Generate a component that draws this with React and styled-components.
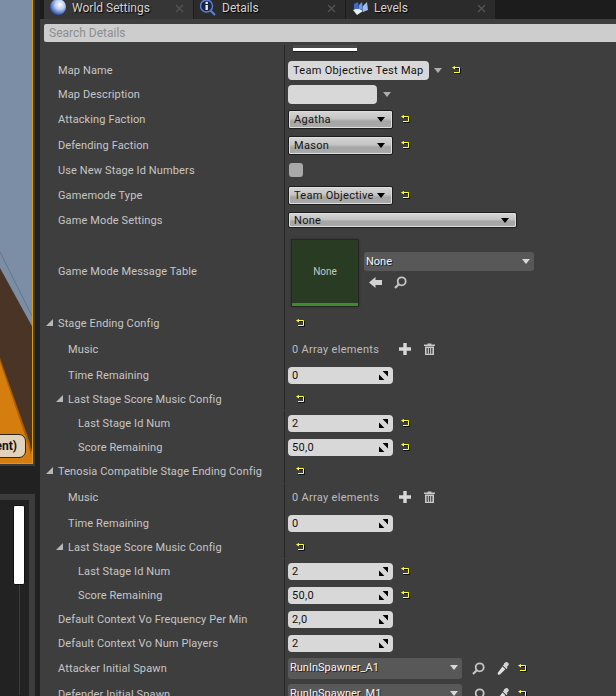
import React from 'react';
import styled, { createGlobalStyle } from 'styled-components';

const Global = createGlobalStyle`
  html, body { margin: 0; padding: 0; background: #1f1f1f; }
  body { width: 616px; height: 696px; overflow: hidden; font-family: Roboto, "Liberation Sans", sans-serif; }
  * { box-sizing: border-box; }
`;

const Page = styled.div`
  display: flex;
  width: 616px;
  height: 696px;
  overflow: hidden;
`;

const LeftColumn = styled.div`
  width: 40px;
  flex: none;
  display: flex;
  flex-direction: column;
  background: #212121;
`;
const ViewportFrame = styled.div`
  width: 35px;
  height: 466px;
  flex: none;
  background: #3a3a3a;
  padding: 0 2px 2px 0;
`;
const Viewport = styled.div`
  position: relative;
  height: 464px;
  border-right: 1px solid #d99a17;
  border-bottom: 1px solid #d99a17;
  overflow: hidden;
  background: #7b8ea5;
`;
const Scene = styled.svg`
  display: block;
`;
const LevelPill = styled.div`
  position: absolute;
  right: 6px;
  top: 434px;
  height: 24px;
  line-height: 22px;
  padding: 0 8px;
  border: 1px solid #2c2418;
  border-radius: 7px;
  background: #e2d2bc;
  color: #111;
  font-size: 12px;
  font-weight: 700;
  white-space: nowrap;
`;
const LowerFrame = styled.div`
  margin-top: 28px;
  width: 35px;
  flex: 1;
  background: #3c3c3c;
  padding: 6px 6px 0 0;
  display: flex;
`;
const LowerInner = styled.div`
  flex: 1;
  background: #222;
  display: flex;
  flex-direction: column;
  padding: 5px 0 1px;
`;
const WhiteBar = styled.div`
  margin-left: 13px;
  width: 12px;
  height: 80px;
  flex: none;
  background: #fff;
  border: 1px solid #111;
  border-radius: 2px;
`;
const TrackLine = styled.div`
  margin-left: 19px;
  width: 1px;
  flex: 1;
  background: #3c3c3c;
`;

const RightPanel = styled.div`
  flex: 1;
  min-width: 0;
  display: flex;
  flex-direction: column;
`;
const TabBar = styled.div`
  height: 19px;
  flex: none;
  display: flex;
  padding-left: 4px;
  background: #1c1c1c;
`;
const Tab = styled.div`
  width: ${p => p.$w}px;
  height: 19px;
  flex: none;
  display: flex;
  align-items: center;
  padding: 0 7px 3px 6px;
  background: ${p => (p.$active ? '#363636' : '#2b2b2b')};
  border-right: 1px solid #1c1c1c;
  color: #d2d2d2;
  font-size: 12px;
  text-shadow: 1px 1px 1px #000;
`;
const TabIcon = styled.svg`
  flex: none;
  margin-right: 6px;
`;
const TabTitle = styled.span`
  flex: 1;
`;
const TabClose = styled.svg`
  flex: none;
  margin-right: 2px;
`;
const Panel = styled.div`
  flex: 1;
  min-height: 0;
  background: #3e3e3e;
  display: flex;
  flex-direction: column;
  padding-top: 5px;
`;
const SearchBox = styled.div`
  height: 18px;
  flex: none;
  margin-left: 4px;
  padding-left: 5px;
  background: #cdcdcd;
  border-radius: 2px 0 0 2px;
  color: #8d8d8d;
  font-size: 12px;
  line-height: 18px;
`;
const Rows = styled.div`
  margin-top: 3px;
  flex: 1;
  min-height: 0;
  overflow: hidden;
`;
const Row = styled.div`
  display: flex;
  height: ${p => p.$h || 24}px;
  padding-bottom: ${p => p.$pb || 0}px;
`;
const NameCell = styled.div`
  width: 244px;
  flex: none;
  display: flex;
  align-items: center;
  padding-left: ${p => 6 + (p.$depth || 0) * 10}px;
  color: #c6c6c6;
  font-size: 11px;
  letter-spacing: 0.12px;
  white-space: nowrap;
`;
const CaretSlot = styled.span`
  width: 12px;
  flex: none;
  display: flex;
  align-items: center;
`;
const CaretIcon = styled.svg`
  display: block;
  margin-top: -2px;
`;
const ValueCell = styled.div`
  flex: 1;
  min-width: 0;
  display: flex;
  align-items: ${p => p.$align || 'center'};
  padding-left: 3px;
  border-left: 1px solid #262626;
  color: #111;
  font-size: 11px;
  letter-spacing: 0.3px;
  white-space: nowrap;
`;
const Strip = styled.div`
  margin-left: 5px;
  width: 64px;
  height: 7px;
  background: #fff;
  border-top: 3px solid #4a4a4a;
  border-bottom: 1px solid #1e1e1e;
`;
const TextBox = styled.div`
  width: ${p => p.$w}px;
  height: 19px;
  flex: none;
  padding-left: 5px;
  background: #d8d8d8;
  border-radius: 4px;
  line-height: 19px;
  color: #111;
`;
const SmallArrow = styled.span`
  flex: none;
  margin-left: ${p => p.$ml || 5}px;
  width: 0;
  height: 0;
  border-left: 4.5px solid transparent;
  border-right: 4.5px solid transparent;
  border-top: 5px solid ${p => p.$color || '#adadad'};
`;
const Combo = styled.div`
  width: ${p => p.$w}px;
  height: ${p => p.$h || 19}px;
  flex: none;
  display: flex;
  align-items: center;
  justify-content: space-between;
  padding: 0 7px 0 5px;
  border: 1px solid #1d1d1d;
  box-shadow: inset 0 0 0 1px #dedede;
  border-radius: 2px;
  background: linear-gradient(#d6d6d6, #c4c4c4 45%, #a6a6a6 60%, #a9a9a9);
  color: #151515;
`;
const ComboArrow = styled.span`
  flex: none;
  width: 0;
  height: 0;
  border-left: 4.5px solid transparent;
  border-right: 4.5px solid transparent;
  border-top: 5px solid #000;
`;
const Checkbox = styled.div`
  width: 14px;
  height: 14px;
  margin-left: 1px;
  background: #a9a9a9;
  border-radius: 3px;
`;
const Reset = styled.svg`
  flex: none;
  display: block;
  margin-left: ${p => p.$ml ?? 8}px;
`;
const NumberBox = styled.div`
  width: 105px;
  height: 17px;
  flex: none;
  display: flex;
  align-items: center;
  justify-content: space-between;
  padding: 0 5px 0 4px;
  background: #d8d8d8;
  border-radius: 4px;
  color: #111;
`;
const AssetPicker = styled.div`
  width: ${p => p.$w}px;
  height: ${p => p.$h}px;
  flex: none;
  display: flex;
  align-items: center;
  justify-content: space-between;
  padding: 0 4px 1px 2px;
  background: #585858;
  border-radius: 3px;
  color: #f4f4f4;
  letter-spacing: 0;
  text-shadow: 1px 1px 0 #222;
`;
const Thumb = styled.div`
  width: 66px;
  height: 66px;
  flex: none;
  margin: 4px 0 0 4px;
  display: flex;
  flex-direction: column;
  background: #2a3b23;
  border-bottom: 3px solid #3f8a2e;
  outline: 1px solid #262626;
  box-shadow: 0 0 3px #1c1c1c;
`;
const ThumbLabel = styled.div`
  flex: 1;
  display: flex;
  align-items: center;
  justify-content: center;
  color: #c4c8c0;
  font-size: 10px;
  letter-spacing: 0;
`;
const AssetColumn = styled.div`
  margin-left: 6px;
  margin-top: -1px;
  display: flex;
  flex-direction: column;
  gap: 5px;
`;
const ToolRow = styled.div`
  display: flex;
  align-items: center;
  padding-left: 5px;
  gap: 12px;
`;
const ArrayText = styled.span`
  margin-left: 4px;
  color: #bcbcbc;
  width: 107px;
`;
const Tool = styled.svg`
  display: block;
  flex: none;
  margin-left: ${p => p.$ml || 0}px;
`;

const ResetIcon = ({ ml }) => (
  <Reset $ml={ml} width="10" height="9" viewBox="0 0 10 9">
    <path d="M2.5 2.5H8.5V7.5H2.5" fill="none" stroke="#111" strokeWidth="1" />
    <path d="M0 1.5L3 0V3.6Z" fill="#ffff30" />
    <path d="M2 1.5H7.5V6.5H2" fill="none" stroke="#ffff30" strokeWidth="1" />
  </Reset>
);

const Spin = () => (
  <Tool width="9" height="9" viewBox="0 0 9 9">
    <path d="M3.6 0H9V5.4Z" fill="#000" />
    <path d="M0 3.6V9H5.4Z" fill="#000" />
  </Tool>
);

const SearchTool = ({ ml }) => (
  <Tool $ml={ml} width="13" height="13" viewBox="0 0 13 13">
    <circle cx="7.7" cy="5.3" r="4" fill="none" stroke="#c4c4c4" strokeWidth="1.8" />
    <path d="M4.8 8.2L1 12" stroke="#c4c4c4" strokeWidth="2.2" />
  </Tool>
);

const Dropper = ({ ml }) => (
  <Tool $ml={ml} width="12" height="13" viewBox="0 0 12 13">
    <path d="M7 1.5L8.6 0.2Q10 -.3 11.5 1.2Q12.3 2.6 11 3.8L9.8 5L10.6 5.8L9.4 7L5.8 3.4L7 2.2Z" fill="#d4d4d4" />
    <path d="M5.5 4.5L8.3 7.3L3 12.5L1 12.8L.6 11Z" fill="#e2e2e2" />
  </Tool>
);

const ArrowBack = () => (
  <Tool width="13" height="11" viewBox="0 0 13 11">
    <path d="M0 5.5L6.5 0V3H13V8H6.5V11Z" fill="#d2d2d2" />
  </Tool>
);

const Plus = () => (
  <Tool width="12" height="12" viewBox="0 0 12 12">
    <path d="M4.3 0H7.7V4.3H12V7.7H7.7V12H4.3V7.7H0V4.3H4.3Z" fill="#d8d8d8" />
  </Tool>
);

const Trash = () => (
  <Tool $ml={13} width="11" height="12" viewBox="0 0 11 12">
    <path d="M0 1.6H3.6V.4H7.4V1.6H11V3H0Z" fill="#c8c8c8" />
    <path fillRule="evenodd" d="M1 3.6H10V12H1ZM2.6 5V10.8H3.8V5ZM4.9 5V10.8H6.1V5ZM7.2 5V10.8H8.4V5Z" fill="#c8c8c8" />
  </Tool>
);

const Caret = () => (
  <CaretSlot>
    <CaretIcon width="7" height="7" viewBox="0 0 7 7">
      <path d="M7 0V7H0Z" fill="#b8b8b8" />
    </CaretIcon>
  </CaretSlot>
);

const CloseX = () => (
  <TabClose width="9" height="9" viewBox="0 0 9 9">
    <path d="M1 1L8 8M8 1L1 8" stroke="#555" strokeWidth="1.2" />
  </TabClose>
);

const Globe = () => (
  <TabIcon width="16" height="16" viewBox="0 0 16 16">
    <defs>
      <radialGradient id="g" cx="0.62" cy="0.35" r="0.75">
        <stop offset="0" stopColor="#ffffff" />
        <stop offset="0.4" stopColor="#b9cdf0" />
        <stop offset="0.8" stopColor="#3f62b8" />
        <stop offset="1" stopColor="#1d2c60" />
      </radialGradient>
    </defs>
    <circle cx="8" cy="7" r="8" fill="url(#g)" />
  </TabIcon>
);

const InfoLens = () => (
  <TabIcon width="16" height="16" viewBox="0 0 16 16">
    <path d="M10.5 10.5L15 15" stroke="#4f7fe0" strokeWidth="2.2" />
    <circle cx="6.5" cy="6" r="6" fill="#1a2440" stroke="#5d80d8" strokeWidth="1.4" />
    <rect x="5.5" y="5" width="2.4" height="5" fill="#e8e8e8" />
    <rect x="5.5" y="1.8" width="2.4" height="2.2" fill="#e8e8e8" />
  </TabIcon>
);

const LevelsGlyph = () => (
  <TabIcon width="16" height="15" viewBox="0 0 16 15">
    <path d="M1 9L6 7L11 10L5 14Z" fill="#e8f0fc" />
    <path d="M2 3L6 1L7 8L2 8Z" fill="#3d6bd0" />
    <path d="M7 4L10 1L11 9L7 8Z" fill="#6f98e8" />
    <path d="M11 5L15 1L16 9L11 11Z" fill="#9dbcf0" />
  </TabIcon>
);

const sections = (d, title) => (
  <>
    <Row $h={d === 0 ? 26 : 25} $pb={d === 0 ? 0 : 1}>
      <NameCell><Caret />{title}</NameCell>
      <ValueCell><ResetIcon ml={8} /></ValueCell>
    </Row>
    <Row $h={26}>
      <NameCell $depth={1}><CaretSlot />Music</NameCell>
      <ValueCell>
        <ArrayText>0 Array elements</ArrayText>
        <Plus /><Trash />
      </ValueCell>
    </Row>
    <Row $h={26}>
      <NameCell $depth={1}><CaretSlot />Time Remaining</NameCell>
      <ValueCell><NumberBox>0<Spin /></NumberBox></ValueCell>
    </Row>
    <Row $h={23} $pb={1}>
      <NameCell $depth={1}><Caret />Last Stage Score Music Config</NameCell>
      <ValueCell><ResetIcon ml={8} /></ValueCell>
    </Row>
    <Row>
      <NameCell $depth={2}><CaretSlot />Last Stage Id Num</NameCell>
      <ValueCell><NumberBox>2<Spin /></NumberBox><ResetIcon /></ValueCell>
    </Row>
    <Row>
      <NameCell $depth={2}><CaretSlot />Score Remaining</NameCell>
      <ValueCell><NumberBox>50,0<Spin /></NumberBox><ResetIcon /></ValueCell>
    </Row>
  </>
);

export default function App() {
  return (
    <Page>
      <Global />
      <LeftColumn>
        <ViewportFrame>
          <Viewport>
            <Scene width="33" height="464" viewBox="0 0 33 464">
              <rect width="33" height="464" fill="#7b8ea5" />
              <path d="M0 252L33 318" stroke="#667486" strokeWidth="1" />
              <path d="M0 268L33 328V464H0Z" fill="#4a3426" />
              <path d="M0 358L30 443L33 464H0Z" fill="#a95f08" />
              <path d="M0 362L28 444L33 464H0Z" fill="#d67d10" />
              <path d="M33 442L29 464H33Z" fill="#d67d10" />
            </Scene>
            <LevelPill>(Persistent)</LevelPill>
          </Viewport>
        </ViewportFrame>
        <LowerFrame>
          <LowerInner>
            <WhiteBar />
            <TrackLine />
          </LowerInner>
        </LowerFrame>
      </LeftColumn>
      <RightPanel>
        <TabBar>
          <Tab $w={150} $active><Globe /><TabTitle>World Settings</TabTitle><CloseX /></Tab>
          <Tab $w={152}><InfoLens /><TabTitle>Details</TabTitle><CloseX /></Tab>
          <Tab $w={150}><LevelsGlyph /><TabTitle>Levels</TabTitle><CloseX /></Tab>
        </TabBar>
        <Panel>
          <SearchBox>Search Details</SearchBox>
          <Rows>
            <Row $h={13}>
              <NameCell />
              <ValueCell $align="flex-start"><Strip /></ValueCell>
            </Row>
            <Row>
              <NameCell><CaretSlot />Map Name</NameCell>
              <ValueCell><TextBox $w={141}>Team Objective Test Map</TextBox><SmallArrow /><ResetIcon ml={10} /></ValueCell>
            </Row>
            <Row>
              <NameCell><CaretSlot />Map Description</NameCell>
              <ValueCell><TextBox $w={89} /><SmallArrow $ml={6} /></ValueCell>
            </Row>
            <Row $h={26}>
              <NameCell><CaretSlot />Attacking Faction</NameCell>
              <ValueCell><Combo $w={105}>Agatha<ComboArrow /></Combo><ResetIcon /></ValueCell>
            </Row>
            <Row $h={26}>
              <NameCell><CaretSlot />Defending Faction</NameCell>
              <ValueCell><Combo $w={105}>Mason<ComboArrow /></Combo><ResetIcon /></ValueCell>
            </Row>
            <Row>
              <NameCell><CaretSlot />Use New Stage Id Numbers</NameCell>
              <ValueCell><Checkbox /></ValueCell>
            </Row>
            <Row $h={26}>
              <NameCell><CaretSlot />Gamemode Type</NameCell>
              <ValueCell><Combo $w={105}>Team Objective<ComboArrow /></Combo><ResetIcon /></ValueCell>
            </Row>
            <Row>
              <NameCell><CaretSlot />Game Mode Settings</NameCell>
              <ValueCell><Combo $w={229} $h={16}>None<ComboArrow /></Combo></ValueCell>
            </Row>
            <Row $h={78}>
              <NameCell><CaretSlot />Game Mode Message Table</NameCell>
              <ValueCell>
                <Thumb><ThumbLabel>None</ThumbLabel></Thumb>
                <AssetColumn>
                  <AssetPicker $w={170} $h={19}>None<SmallArrow $color="#d8d8d8" /></AssetPicker>
                  <ToolRow><ArrowBack /><SearchTool /></ToolRow>
                </AssetColumn>
              </ValueCell>
            </Row>
            {sections(0, 'Stage Ending Config')}
            {sections(1, 'Tenosia Compatible Stage Ending Config')}
            <Row>
              <NameCell><CaretSlot />Default Context Vo Frequency Per Min</NameCell>
              <ValueCell><NumberBox>2,0<Spin /></NumberBox></ValueCell>
            </Row>
            <Row>
              <NameCell><CaretSlot />Default Context Vo Num Players</NameCell>
              <ValueCell><NumberBox>2<Spin /></NumberBox></ValueCell>
            </Row>
            <Row $h={26}>
              <NameCell><CaretSlot />Attacker Initial Spawn</NameCell>
              <ValueCell>
                <AssetPicker $w={174} $h={21}>RunInSpawner_A1<SmallArrow $color="#d8d8d8" /></AssetPicker>
                <SearchTool ml={10} />
                <Dropper ml={12} />
                <ResetIcon ml={9} />
              </ValueCell>
            </Row>
            <Row $h={26}>
              <NameCell><CaretSlot />Defender Initial Spawn</NameCell>
              <ValueCell>
                <AssetPicker $w={174} $h={21}>RunInSpawner_M1<SmallArrow $color="#d8d8d8" /></AssetPicker>
                <SearchTool ml={10} />
                <Dropper ml={12} />
                <ResetIcon ml={9} />
              </ValueCell>
            </Row>
          </Rows>
        </Panel>
      </RightPanel>
    </Page>
  );
}
